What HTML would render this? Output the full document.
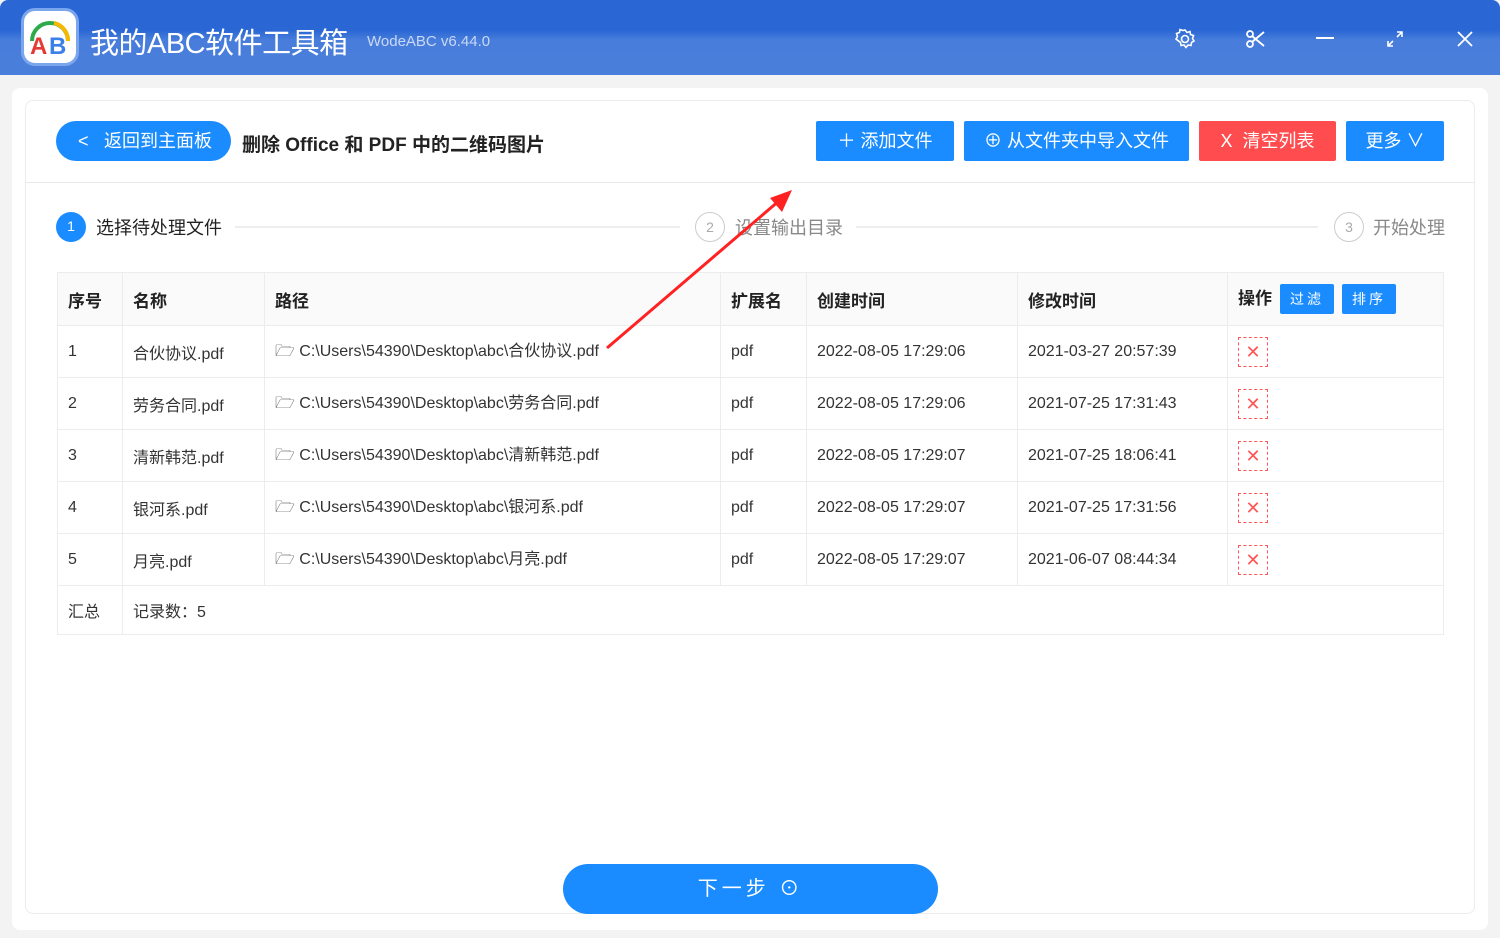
<!DOCTYPE html>
<html><head><meta charset="utf-8"><style>
*{box-sizing:border-box;margin:0;padding:0}
body{width:1500px;height:938px;overflow:hidden;background:#f3f3f3;font-family:"Liberation Sans","Noto Sans CJK SC",sans-serif;position:relative;color:#333}
.title{position:absolute;left:0;top:0;width:1500px;height:75px;background:linear-gradient(180deg,#2a67d5 0,#2a67d5 30px,#487ddb 40px,#4a7edb 75px);border-radius:8px 8px 0 0}
.logo{position:absolute;left:21px;top:8px;width:58px;height:58px;border-radius:14px;background:#fff;border:3px solid #7aa6ee}
.t1{position:absolute;left:90px;top:20px;color:#fff;font-size:29px;letter-spacing:-0.5px}
.t2{position:absolute;left:367px;top:33px;color:#c9d8f5;font-size:15px}
.ic{position:absolute;top:28px;color:#fff}
.card{position:absolute;left:12px;top:88px;width:1476px;height:842px;background:#fff;border-radius:8px}
.inner{position:absolute;left:25px;top:100px;width:1450px;height:814px;border:1px solid #ececec;border-radius:8px;background:#fff}
.back{position:absolute;left:56px;top:121px;width:175px;height:40px;border-radius:20px;background:#1a8cff;color:#fff;font-size:18px;line-height:40px;padding-left:48px}
.h{position:absolute;left:242px;top:130px;font-size:19px;font-weight:bold;color:#222}
.btn{position:absolute;top:121px;height:40px;color:#fff;font-size:18px;line-height:40px;text-align:center;border-radius:2px;background:#1a8cff}
.line{position:absolute;left:26px;top:182px;width:1448px;height:1px;background:#eaeaea}
.step{position:absolute;top:212px;width:30px;height:30px;border-radius:50%;text-align:center;line-height:28px;font-size:14px}
.sl{position:absolute;top:214px;font-size:18px}
.bar{position:absolute;top:226px;height:2px;background:#eee}
table{position:absolute;left:57px;top:272px;width:1387px;border-collapse:collapse;font-size:16px}
td{border:1px solid #ececec;height:52px;padding-left:10px;color:#333}
tr.hd td{background:#fafafa;font-weight:bold;height:53px;color:#222;font-size:17px}
tr.sum td{height:49px}
.x{display:inline-block;width:30px;height:30px;border:1px dashed #f55;color:#f55;text-align:center;line-height:28px;font-size:18px}
.sb{display:inline-block;background:#1a8cff;color:#fff;font-size:14px;font-weight:normal;width:54px;height:30px;line-height:30px;text-align:center;border-radius:2px;margin-left:8px;vertical-align:middle;letter-spacing:3px}
.next{position:absolute;left:563px;top:864px;width:375px;height:50px;border-radius:25px;background:#1a8cff;color:#fff;font-size:20px;line-height:50px;text-align:center;letter-spacing:4px}
</style></head><body>
<div class="title">
<div class="logo"><svg width="52" height="52" viewBox="0 0 52 52"><path d="M8 30 A18 18 0 0 1 44 30" fill="none" stroke="#2daa4a" stroke-width="4"/><path d="M30 12 A18 18 0 0 1 44 30" fill="none" stroke="#f6b800" stroke-width="4"/><text x="6" y="43" font-size="24" font-weight="bold" fill="#e53935" font-family="Liberation Sans">A</text><text x="25" y="43" font-size="24" font-weight="bold" fill="#3b7fe8" font-family="Liberation Sans">B</text></svg></div>
<div class="t1">我的ABC软件工具箱</div><div class="t2">WodeABC v6.44.0</div>
<svg class="ic" style="left:1174px" width="22" height="22" viewBox="0 0 22 22" fill="none" stroke="#fff" stroke-width="1.6"><circle cx="11" cy="11" r="3.5"/><path d="M11 2l2 2.5 3-1 .5 3 3 1-1 3 1.5 2.5-2.5 1.5-.5 3-3-.5-2 2.5-2-2.5-3 .5-.5-3L2 11l1.5-2.5-1-3 3-1 .5-3 3 1z"/></svg>
<svg class="ic" style="left:1244px" width="22" height="22" viewBox="0 0 22 22" fill="none" stroke="#fff" stroke-width="1.8"><circle cx="6" cy="6" r="3"/><circle cx="6" cy="16" r="3"/><path d="M8 8l12 10M8 14L20 4"/></svg>
<div class="ic" style="left:1316px;top:37px;width:18px;height:2px;background:#fff"></div>
<svg class="ic" style="left:1386px;top:30px" width="18" height="18" viewBox="0 0 18 18" stroke="#fff" stroke-width="1.6" fill="none"><path d="M2 16l5-5M16 2l-5 5M2 11v5h5M16 7V2h-5"/></svg>
<svg class="ic" style="left:1456px;top:30px" width="18" height="18" viewBox="0 0 18 18" stroke="#fff" stroke-width="1.8"><path d="M2 2l14 14M16 2L2 16"/></svg>
</div>
<div class="card"></div><div class="inner"></div>
<div class="back"><span style="position:absolute;left:22px">&lt;</span>返回到主面板</div>
<div class="h">删除 Office 和 PDF 中的二维码图片</div>
<div class="btn" style="left:816px;width:138px">＋ 添加文件</div>
<div class="btn" style="left:964px;width:225px">⊕ 从文件夹中导入文件</div>
<div class="btn" style="left:1199px;width:137px;background:#ff4d4f">X &nbsp;清空列表</div>
<div class="btn" style="left:1346px;width:98px">更多 ∨</div>
<div class="line"></div>
<div class="step" style="left:56px;background:#1a8cff;color:#fff">1</div><div class="sl" style="left:96px;color:#222">选择待处理文件</div>
<div class="bar" style="left:235px;width:445px"></div>
<div class="step" style="left:695px;border:1px solid #ccc;color:#aaa">2</div><div class="sl" style="left:735px;color:#888">设置输出目录</div>
<div class="bar" style="left:856px;width:462px"></div>
<div class="step" style="left:1334px;border:1px solid #ccc;color:#aaa">3</div><div class="sl" style="left:1373px;color:#888">开始处理</div>
<table>
<colgroup><col style="width:65px"><col style="width:142px"><col style="width:456px"><col style="width:86px"><col style="width:211px"><col style="width:210px"><col></colgroup>
<tr class="hd"><td>序号</td><td>名称</td><td>路径</td><td>扩展名</td><td>创建时间</td><td>修改时间</td><td>操作<span class="sb">过滤</span><span class="sb">排序</span></td></tr>
<tr><td>1</td><td>合伙协议.pdf</td><td>🗁 C:\Users\54390\Desktop\abc\合伙协议.pdf</td><td>pdf</td><td>2022-08-05 17:29:06</td><td>2021-03-27 20:57:39</td><td><span class="x">✕</span></td></tr>
<tr><td>2</td><td>劳务合同.pdf</td><td>🗁 C:\Users\54390\Desktop\abc\劳务合同.pdf</td><td>pdf</td><td>2022-08-05 17:29:06</td><td>2021-07-25 17:31:43</td><td><span class="x">✕</span></td></tr>
<tr><td>3</td><td>清新韩范.pdf</td><td>🗁 C:\Users\54390\Desktop\abc\清新韩范.pdf</td><td>pdf</td><td>2022-08-05 17:29:07</td><td>2021-07-25 18:06:41</td><td><span class="x">✕</span></td></tr>
<tr><td>4</td><td>银河系.pdf</td><td>🗁 C:\Users\54390\Desktop\abc\银河系.pdf</td><td>pdf</td><td>2022-08-05 17:29:07</td><td>2021-07-25 17:31:56</td><td><span class="x">✕</span></td></tr>
<tr><td>5</td><td>月亮.pdf</td><td>🗁 C:\Users\54390\Desktop\abc\月亮.pdf</td><td>pdf</td><td>2022-08-05 17:29:07</td><td>2021-06-07 08:44:34</td><td><span class="x">✕</span></td></tr>
<tr class="sum"><td>汇总</td><td colspan="6">记录数：5</td></tr>
</table>
<svg style="position:absolute;left:0;top:0" width="1500" height="938"><line x1="607" y1="348" x2="780" y2="200" stroke="#f22" stroke-width="3"/><polygon points="792,190 770,198 782,212" fill="#f22"/></svg>
<div class="next">下一步 ⊙</div>
</body></html>
